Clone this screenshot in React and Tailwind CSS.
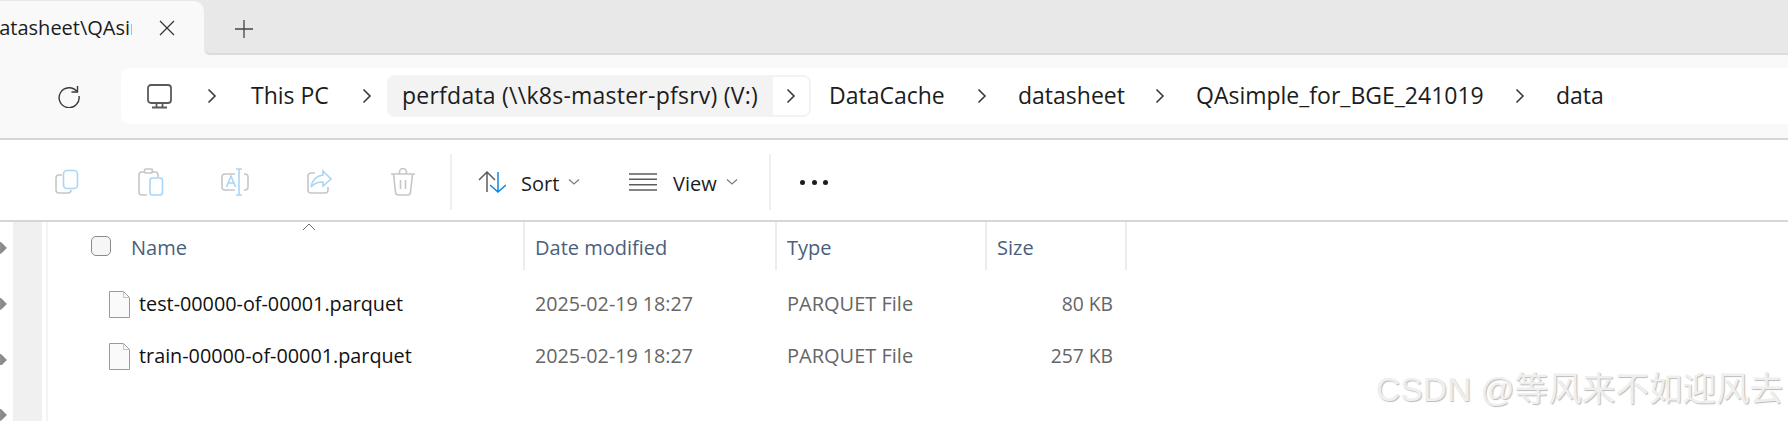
const Chev = () => (
  <svg width="12" height="16" viewBox="0 0 12 16" fill="none" stroke="#3a3a3a" strokeWidth="1.6"><path d="M2.5 1.5 9 8l-6.500 6.500" /></svg>
);
const Down = () => (
  <svg width="12" height="8" viewBox="0 0 12 8" fill="none" stroke="#7a7a7a" strokeWidth="1.200"><path d="M1 1.500 6 6l5-4.500" /></svg>
);
const Arrow = () => (
  <svg width="7" height="12" viewBox="0 0 7 12" fill="#8a8a8a"><path d="M0 0h1l6 6-6 6H0z" /></svg>
);
const FileIcon = () => (
  <svg width="21" height="27" viewBox="0 0 21 27" fill="#fafafa" stroke="#9a9a9a" strokeWidth="1"><path d="M.5.500h14l6 6v20H.500z" /><path d="M14.500.500v6h6" fill="none" stroke="#c4c4c4" /></svg>
);

function App() {
  const g = "#c6c6c6", b = "#a9d5f7";
  return (
    <div className="relative h-[421px] w-[1788px] overflow-hidden bg-white font-['Open_Sans','Noto_Sans',sans-serif] text-[#1c1c1c]">
      <div className="flex h-[55px] bg-[#f9f9f9]">
        <div className="h-full w-[204px] bg-[#e8e8e8] pt-px">
          <div className="flex h-[54px] items-center rounded-tr-[10px] bg-[#f9f9f9]">
            <div className="w-[132px] overflow-hidden whitespace-nowrap text-[20px]">
              <span className="-ml-[13px] inline-block">datasheet\QAsimple</span>
            </div>
            <svg className="ml-[27px]" width="16" height="16" viewBox="0 0 16 16" stroke="#333" strokeWidth="1.200"><path d="M1 1l14 14M15 1 1 15" /></svg>
          </div>
        </div>
        <div className="flex flex-1 items-center rounded-bl-[6px] border-b-2 border-[#dcdcdc] bg-[#e8e8e8] pl-[31px] pt-[5px]">
          <svg width="18" height="18" viewBox="0 0 18 18" stroke="#444" strokeWidth="1.300"><path d="M9 0v18M0 9h18" /></svg>
        </div>
      </div>

      <div className="flex h-[83px] items-start bg-[#f9f9f9] pl-[57px] pt-[13px]">
        <div className="flex h-[56px] w-[64px] items-center">
          <svg width="24" height="24" viewBox="0 0 24 24" fill="none" stroke="#3a3a3a" strokeWidth="1.400"><path d="M20 7.500A10 10 0 1 0 22 12" /><path d="M20.500 2v6h-6" /></svg>
        </div>
        <div className="flex h-[56px] flex-1 items-center rounded-l-[8px] bg-white pl-[26px] text-[23px]">
          <svg width="25" height="25" viewBox="0 0 25 25" fill="none" stroke="#5a5a5a" strokeWidth="1.800"><rect x="1" y="1" width="23" height="18" rx="3" /><path d="M9.500 19v4M15.500 19v4M5 23.500h15" /></svg>
          <div className="flex w-[79px] justify-center"><Chev /></div>
          <div className="w-[79px] whitespace-nowrap pb-[2px]">This PC</div>
          <div className="flex w-[57px] justify-center pl-[16px]"><Chev /></div>
          <div className="flex h-[42px] w-[386px] items-center whitespace-nowrap rounded-l-[8px] bg-[#f3f3f3] pb-[2px] pl-[15px] tracking-[0.24px]">perfdata (\\k8s-master-pfsrv) (V:)</div>
          <div className="flex h-[42px] w-[38px] items-center justify-center rounded-r-[8px] border-2 border-l-0 border-[#f3f3f3]"><Chev /></div>
          <div className="ml-[18px] w-[116px] whitespace-nowrap pb-[2px]">DataCache</div>
          <div className="flex w-[73px] justify-center"><Chev /></div>
          <div className="w-[106px] whitespace-nowrap pb-[2px]">datasheet</div>
          <div className="flex w-[72px] justify-center"><Chev /></div>
          <div className="w-[288px] whitespace-nowrap pb-[2px]">QAsimple_for_BGE_241019</div>
          <div className="flex w-[72px] justify-center"><Chev /></div>
          <div className="whitespace-nowrap pb-[2px]">data</div>
        </div>
      </div>

      <div className="flex h-[84px] items-center border-y-2 border-[#d6d6d6] pl-[25px] pt-[4px] text-[20px]">
        <div className="flex w-[84px] justify-center">
          <svg width="26" height="26" viewBox="0 0 26 26" fill="none" strokeWidth="1.600"><path d="M8 6H5a3 3 0 0 0-3 3v12a3 3 0 0 0 3 3h9a3 3 0 0 0 3-3" stroke={g} /><rect x="9.500" y="1.500" width="14" height="18" rx="3.500" stroke={b} /></svg>
        </div>
        <div className="flex w-[84px] justify-center">
          <svg width="26" height="28" viewBox="0 0 26 28" fill="none" strokeWidth="1.600"><path d="M13 4h4a3 3 0 0 1 3 3v2M9 27H4a3 3 0 0 1-3-3V7a3 3 0 0 1 3-3h3" stroke={g} /><rect x="6.500" y="1" width="8" height="4" rx="1.500" stroke={g} /><rect x="12" y="10" width="12.500" height="17" rx="2.500" stroke={b} /></svg>
        </div>
        <div className="flex w-[84px] justify-center">
          <svg width="28" height="28" viewBox="0 0 28 28" fill="none" strokeWidth="1.600"><path d="M14 6H4a3 3 0 0 0-3 3v10a3 3 0 0 0 3 3h10M23 6h1a3 3 0 0 1 3 3v10a3 3 0 0 1-3 3h-1" stroke={g} /><path d="M15 1h6M15 27h6M18 1v26M5.500 19 10 8l4.500 11M7 15h6" stroke={b} /></svg>
        </div>
        <div className="flex w-[84px] justify-center">
          <svg width="26" height="26" viewBox="0 0 26 26" fill="none" strokeWidth="1.600"><path d="M9 4H5a3 3 0 0 0-3 3v14a3 3 0 0 0 3 3h14a3 3 0 0 0 3-3v-3" stroke={g} /><path d="M17 2l8 8-8 7v-4c-6 0-9 1-12 5 1-6 5-11 12-12z" stroke={b} /></svg>
        </div>
        <div className="flex w-[84px] justify-center">
          <svg width="26" height="28" viewBox="0 0 26 28" fill="none" stroke={g} strokeWidth="1.600"><path d="M1 6h24M9.500 6V4a2.500 2.500 0 0 1 7 0v2M3.500 6l2 18a3 3 0 0 0 3 3h9a3 3 0 0 0 3-3l2-18M10.500 12v9M15.500 12v9" /></svg>
        </div>
        <div className="ml-[5px] h-[56px] w-[2px] bg-[#efefef]" />
        <div className="ml-[26px] flex w-[43px]">
          <svg width="28" height="22" viewBox="0 0 28 22" fill="none" strokeWidth="1.500"><path d="M9 21V1M1 9l8-8 8 8" stroke="#5c5c5c" /><path d="M20 1v20M12 14l8 7 8-7" stroke="#0f86de" /></svg>
        </div>
        <div className="w-[47px] whitespace-nowrap pt-[3px]">Sort</div>
        <Down />
        <div className="ml-[49px] flex w-[44px]">
          <svg width="28" height="18" viewBox="0 0 28 18" stroke="#5c5c5c" strokeWidth="1.400"><path d="M0 1h28M0 6.300h28M0 11.700h28M0 17h28" /></svg>
        </div>
        <div className="w-[53px] whitespace-nowrap pt-[3px]">View</div>
        <Down />
        <div className="ml-[31px] h-[56px] w-[2px] bg-[#efefef]" />
        <div className="ml-[29px] flex w-[28px] justify-between">
          <span className="h-[5px] w-[5px] rounded-full bg-[#1c1c1c]" />
          <span className="h-[5px] w-[5px] rounded-full bg-[#1c1c1c]" />
          <span className="h-[5px] w-[5px] rounded-full bg-[#1c1c1c]" />
        </div>
      </div>

      <div className="flex h-[199px]">
        <div className="flex w-[13px] flex-col gap-[44px] pt-[20px]">
          <Arrow /><Arrow /><Arrow /><Arrow />
        </div>
        <div className="w-[29px] bg-[#f0f0f0]" />
        <div className="ml-[4px] w-[2px] bg-[#f4f4f4]" />
        <div className="flex-1">
          <div className="flex h-[48px] items-stretch text-[20px] text-[#4a5f7c]">
            <div className="relative flex w-[477px] items-center border-r-2 border-[#ececec] pl-[43px]">
              <span className="h-[20px] w-[20px] rounded-[5px] border border-[#8a8a8a] bg-[#f6f6f6]" />
              <span className="ml-[20px] pt-[4px]">Name</span>
              <svg className="absolute left-[254px] top-[1px]" width="14" height="8" viewBox="0 0 14 8" fill="none" stroke="#6a6a6a" strokeWidth="1"><path d="M1 7l6-6 6 6" /></svg>
            </div>
            <div className="flex w-[252px] items-center border-r-2 border-[#ececec] pl-[10px] pt-[4px]">Date modified</div>
            <div className="flex w-[210px] items-center border-r-2 border-[#ececec] pl-[10px] pt-[4px]">Type</div>
            <div className="flex w-[140px] items-center border-r-2 border-[#ececec] pl-[10px] pt-[4px]">Size</div>
          </div>
          <div className="mt-[8px]">
            {[
              ["test-00000-of-00001.parquet", "80 KB"],
              ["train-00000-of-00001.parquet", "257 KB"],
            ].map(([n, s]) => (
              <div key={n} className="flex h-[52px] items-center text-[20px] text-[#666666]">
                <div className="flex w-[477px] items-center pl-[61px] text-[#111111]">
                  <FileIcon />
                  <span className="ml-[9px] whitespace-nowrap text-[19.8px]">{n}</span>
                </div>
                <div className="w-[252px] whitespace-nowrap pl-[10px] text-[19.7px]">2025-02-19 18:27</div>
                <div className="w-[209px] whitespace-nowrap pl-[10px]">PARQUET File</div>
                <div className="w-[127px] whitespace-nowrap text-right text-[19.3px]">{s}</div>
              </div>
            ))}
          </div>
        </div>
      </div>

      <div className="absolute left-[1376px] top-[371px] whitespace-nowrap font-['Liberation_Sans','Noto_Sans_CJK_SC',sans-serif] text-[33.6px] leading-[38px] text-[#efefef] [text-shadow:1px_1px_1px_#bcbcbc]">CSDN @等风来不如迎风去</div>
    </div>
  );
}
export default App;
